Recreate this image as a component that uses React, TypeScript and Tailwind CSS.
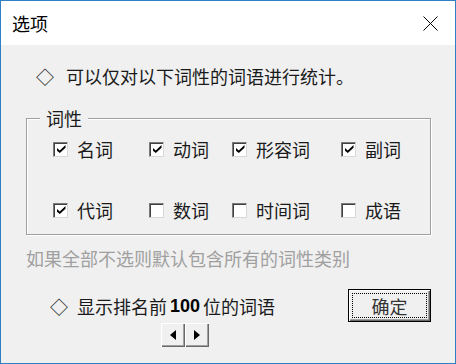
import React from "react";

function Check({ checked }: { checked: boolean }) {
  return (
    <span className="relative w-[15px] h-[15px] shrink-0 bg-white border border-t-[#7a7a7a] border-l-[#7a7a7a] border-r-[#d8d8d8] border-b-[#d8d8d8] shadow-[inset_1px_1px_0_#404040] flex items-center justify-center">
      {checked && (
        <svg width="9" height="8" viewBox="0 0 9 8" className="ml-[1px]">
          <polygon points="0,3 2.8,5.4 8.5,0 8.5,2.8 2.8,8 0,5.8" fill="#000" />
        </svg>
      )}
    </span>
  );
}

function Item({ label, checked }: { label: string; checked: boolean }) {
  return (
    <div className="flex items-center h-[24px]">
      <Check checked={checked} />
      <span className="ml-[9px] text-[18px] leading-[24px] text-[#1a1a1a]">{label}</span>
    </div>
  );
}

export default function App() {
  return (
    <div className="w-[456px] h-[364px] border border-[#2f7fc4] flex flex-col font-['Noto_Sans_CJK_SC',sans-serif] text-black overflow-hidden">
      <div className="h-[44px] bg-white flex items-center justify-between pl-[11px] pr-[17px] shrink-0">
        <span className="text-[18px] leading-[24px]">选项</span>
        <svg width="15" height="15" viewBox="0 0 15 15">
          <path d="M0.5 0.5 L14.5 14.5 M14.5 0.5 L0.5 14.5" stroke="#000" strokeWidth="1" />
        </svg>
      </div>
      <div className="flex-1 bg-[#f0f0f0] flex flex-col">
        <div className="mt-[19px] ml-[35px] flex items-center text-[18px] leading-[24px] text-[#1a1a1a]">
          <span>◇</span>
          <span className="ml-[12px]">可以仅对以下词性的词语进行统计。</span>
        </div>
        <fieldset className="mt-[20px] ml-[25px] w-[405px] border border-[#a0a0a0] shadow-[inset_1px_1px_0_#fff,1px_1px_0_#fff] p-0 m-0">
          <legend className="ml-[13px] px-[6px] text-[18px] leading-[20px] text-[#1a1a1a] bg-[#f0f0f0]">词性</legend>
          <div className="grid grid-cols-[96px_83px_109px_auto] gap-y-[37px] pl-[26px] pt-[9px] pb-[12px]">
            <Item label="名词" checked />
            <Item label="动词" checked />
            <Item label="形容词" checked />
            <Item label="副词" checked />
            <Item label="代词" checked />
            <Item label="数词" checked={false} />
            <Item label="时间词" checked={false} />
            <Item label="成语" checked={false} />
          </div>
        </fieldset>
        <div className="mt-[11px] ml-[25px] text-[18px] leading-[24px] text-[#a0a0a0]">
          如果全部不选则默认包含所有的词性类别
        </div>
        <div className="mt-[19px] flex items-center justify-between pl-[49px] pr-[24px]">
          <div className="flex items-center text-[18px] leading-[24px] text-[#1a1a1a]">
            <span>◇</span>
            <span className="ml-[9px]">显示排名前</span>
            <span className="mx-[3px] font-['Liberation_Sans',sans-serif] font-bold text-[18px] text-black">100</span>
            <span>位的词语</span>
          </div>
          <div className="w-[83px] h-[33px] border border-black shadow-[inset_1px_1px_0_#fff,inset_-1px_-1px_0_#696969,inset_-2px_-2px_0_#a0a0a0] p-[3px] flex">
            <div className="flex-1 border border-dotted border-black flex items-center justify-center text-[18px] leading-[24px] text-[#333]">
              确定
            </div>
          </div>
        </div>
        <div className="mt-[1px] ml-[160px] flex">
          <div className="w-[24px] h-[24px] bg-[#f0f0f0] shadow-[inset_1px_1px_0_#fff,inset_-1px_-1px_0_#696969,inset_-2px_-2px_0_#a0a0a0] flex items-center justify-center">
            <svg width="6" height="10" viewBox="0 0 6 10">
              <polygon points="6,0 6,10 0,5" fill="#000" />
            </svg>
          </div>
          <div className="w-[24px] h-[24px] bg-[#f0f0f0] shadow-[inset_1px_1px_0_#fff,inset_-1px_-1px_0_#696969,inset_-2px_-2px_0_#a0a0a0] flex items-center justify-center">
            <svg width="6" height="10" viewBox="0 0 6 10">
              <polygon points="0,0 0,10 6,5" fill="#000" />
            </svg>
          </div>
        </div>
      </div>
    </div>
  );
}
